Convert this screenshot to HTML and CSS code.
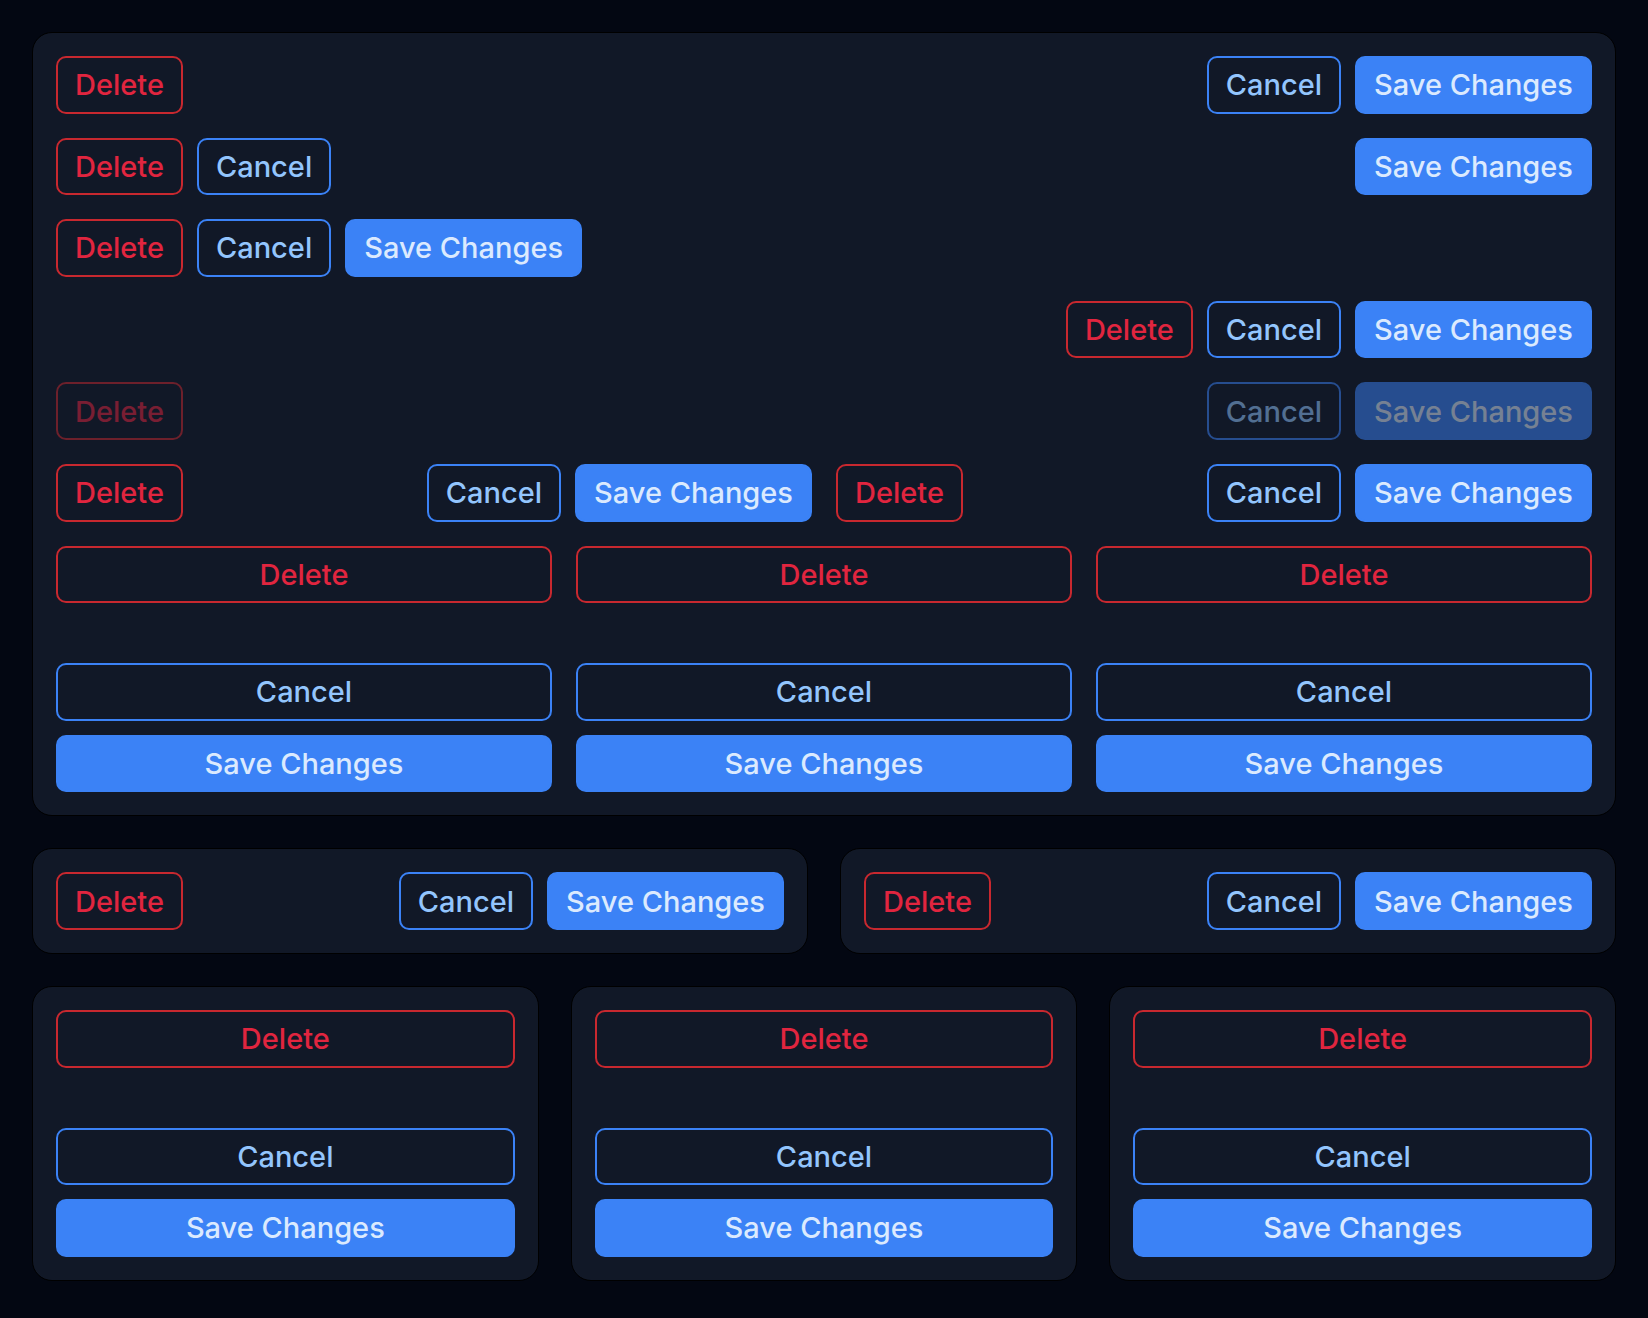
FILE: index.html
```html
<!DOCTYPE html>
<html lang="en">
<head>
<meta charset="utf-8">
<title>Button layouts</title>
<link rel="stylesheet" href="styles.css">
</head>
<body>
<main class="page">
  <section class="card">
    <div class="row">
      <div class="group"><button class="btn danger">Delete</button></div>
      <div class="group"><button class="btn secondary">Cancel</button><button class="btn primary">Save Changes</button></div>
    </div>
    <div class="row">
      <div class="group"><button class="btn danger">Delete</button><button class="btn secondary">Cancel</button></div>
      <div class="group"><button class="btn primary">Save Changes</button></div>
    </div>
    <div class="row start">
      <div class="group"><button class="btn danger">Delete</button><button class="btn secondary">Cancel</button><button class="btn primary">Save Changes</button></div>
    </div>
    <div class="row end">
      <div class="group"><button class="btn danger">Delete</button><button class="btn secondary">Cancel</button><button class="btn primary">Save Changes</button></div>
    </div>
    <div class="row">
      <div class="group"><button class="btn danger" disabled>Delete</button></div>
      <div class="group"><button class="btn secondary" disabled>Cancel</button><button class="btn primary" disabled>Save Changes</button></div>
    </div>
    <div class="halves">
      <div class="row">
        <div class="group"><button class="btn danger">Delete</button></div>
        <div class="group"><button class="btn secondary">Cancel</button><button class="btn primary">Save Changes</button></div>
      </div>
      <div class="row">
        <div class="group"><button class="btn danger">Delete</button></div>
        <div class="group"><button class="btn secondary">Cancel</button><button class="btn primary">Save Changes</button></div>
      </div>
    </div>
    <div class="thirds">
      <div class="stack">
        <button class="btn danger">Delete</button>
        <div class="stack-actions"><button class="btn secondary">Cancel</button><button class="btn primary">Save Changes</button></div>
      </div>
      <div class="stack">
        <button class="btn danger">Delete</button>
        <div class="stack-actions"><button class="btn secondary">Cancel</button><button class="btn primary">Save Changes</button></div>
      </div>
      <div class="stack">
        <button class="btn danger">Delete</button>
        <div class="stack-actions"><button class="btn secondary">Cancel</button><button class="btn primary">Save Changes</button></div>
      </div>
    </div>
  </section>

  <div class="pair">
    <section class="card">
      <div class="row">
        <div class="group"><button class="btn danger">Delete</button></div>
        <div class="group"><button class="btn secondary">Cancel</button><button class="btn primary">Save Changes</button></div>
      </div>
    </section>
    <section class="card">
      <div class="row">
        <div class="group"><button class="btn danger">Delete</button></div>
        <div class="group"><button class="btn secondary">Cancel</button><button class="btn primary">Save Changes</button></div>
      </div>
    </section>
  </div>

  <div class="trio">
    <section class="card">
      <div class="stack">
        <button class="btn danger">Delete</button>
        <div class="stack-actions"><button class="btn secondary">Cancel</button><button class="btn primary">Save Changes</button></div>
      </div>
    </section>
    <section class="card">
      <div class="stack">
        <button class="btn danger">Delete</button>
        <div class="stack-actions"><button class="btn secondary">Cancel</button><button class="btn primary">Save Changes</button></div>
      </div>
    </section>
    <section class="card">
      <div class="stack">
        <button class="btn danger">Delete</button>
        <div class="stack-actions"><button class="btn secondary">Cancel</button><button class="btn primary">Save Changes</button></div>
      </div>
    </section>
  </div>
</main>
</body>
</html>
```

FILE: styles.css
```css
html, body {
  margin: 0;
  background: #030712;
  min-height: 100%;
}

body {
  font-family: Inter, "Noto Sans", "Liberation Sans", sans-serif;
}

.page {
  padding: 32px;
  display: flex;
  flex-direction: column;
  gap: 32px;
}

.card {
  background: #111827;
  border: 1px solid #000;
  border-radius: 20px;
  padding: 23px;
  display: flex;
  flex-direction: column;
  gap: 24px;
}

.row {
  display: flex;
  justify-content: space-between;
  align-items: center;
}

.row.start { justify-content: flex-start; }
.row.end { justify-content: flex-end; }

.group {
  display: flex;
  gap: 14px;
}

.halves {
  display: grid;
  grid-template-columns: 1fr 1fr;
  gap: 24px;
}

.thirds {
  display: grid;
  grid-template-columns: repeat(3, 1fr);
  gap: 24px;
}

.pair {
  display: grid;
  grid-template-columns: 1fr 1fr;
  gap: 32px;
}

.trio {
  display: grid;
  grid-template-columns: repeat(3, 1fr);
  gap: 32px;
}

.stack {
  display: flex;
  flex-direction: column;
}

.stack-actions {
  margin-top: 60px;
  display: flex;
  flex-direction: column;
  gap: 14px;
}

.btn {
  box-sizing: border-box;
  height: 57.6px;
  padding: 0 17px;
  border: 2px solid transparent;
  border-radius: 10px;
  font-family: Inter, "Noto Sans", "Liberation Sans", sans-serif;
  font-size: 29px;
  font-weight: 500;
  line-height: 1;
  display: inline-flex;
  align-items: center;
  justify-content: center;
  background: transparent;
  cursor: pointer;
  white-space: nowrap;
}

.stack .btn {
  width: 100%;
}

.btn.danger {
  border-color: #c8282f;
  color: #e1253f;
}

.btn.secondary {
  border-color: #3b82f6;
  color: #93c5fd;
}

.btn.primary {
  background: #3b82f6;
  border-color: #3b82f6;
  color: #dbeafe;
}

.btn:disabled {
  opacity: 0.5;
  cursor: default;
}
```
